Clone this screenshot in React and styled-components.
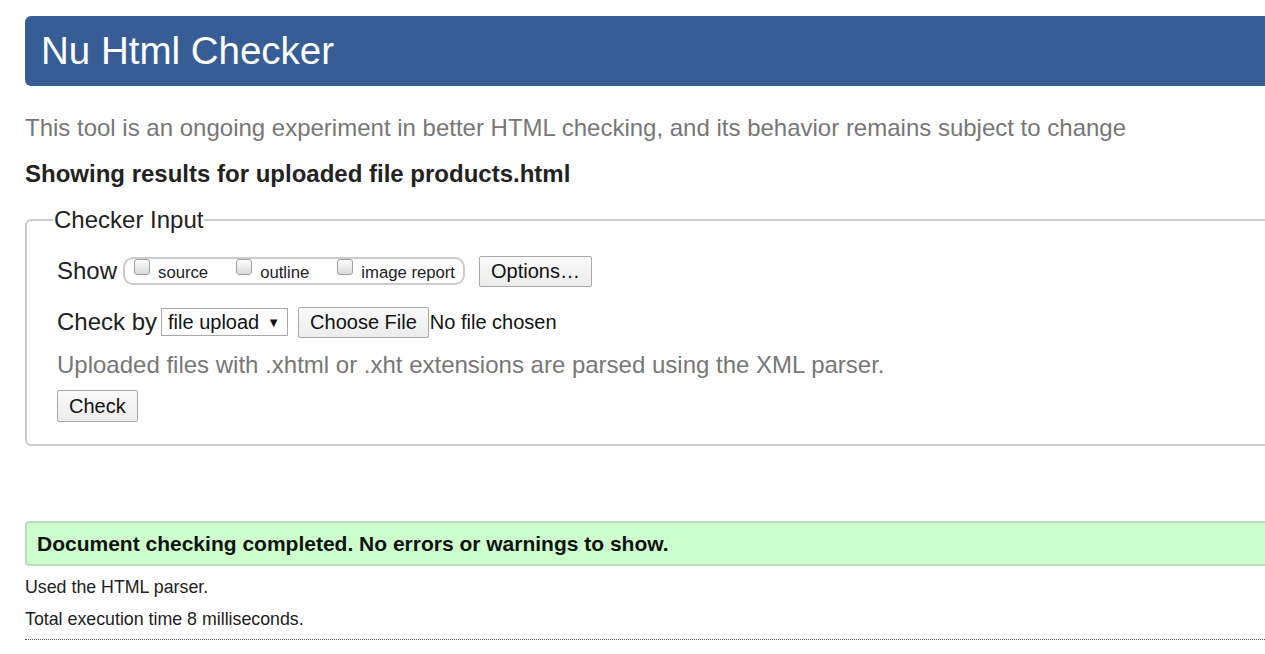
import React from 'react';
import styled, { createGlobalStyle } from 'styled-components';

const GlobalStyle = createGlobalStyle`
  html, body {
    margin: 0;
    padding: 0;
    background: #fff;
    overflow: hidden;
  }
  body {
    font-family: 'Liberation Sans', Arial, sans-serif;
    color: #222;
  }
`;

const Page = styled.div`
  width: 1320px;
  padding: 16px 0 0 25px;
`;

const Header = styled.h1`
  margin: 0;
  height: 70px;
  display: flex;
  align-items: center;
  padding-left: 16px;
  background: #365d95;
  color: #fff;
  font-size: 38.5px;
  font-weight: normal;
  border-radius: 6px;
`;

const Intro = styled.p`
  margin: 29px 0 0;
  font-size: 24px;
  color: #777;
  line-height: 26px;
`;

const ResultTitle = styled.h2`
  margin: 20px 0 0;
  font-size: 24px;
  font-weight: bold;
  line-height: 26px;
  color: #222;
`;

const Fieldset = styled.fieldset`
  margin: 19px 0 0;
  padding: 21px 0 22px 30px;
  border: 2px solid #ccc;
  border-radius: 6px;
  min-height: 0;
`;

const Legend = styled.legend`
  font-size: 24px;
  line-height: 28px;
  padding: 0 1px;
  margin-left: -4px;
  color: #222;
`;

const Row = styled.div`
  display: flex;
  align-items: center;
  gap: ${(p) => p.$gap || 8}px;
  min-height: 32px;
  margin-bottom: ${(p) => p.$mb || 0}px;
`;

const Label = styled.span`
  font-size: 24px;
  color: #222;
`;

const CheckGroup = styled.div`
  display: flex;
  align-items: center;
  height: 24px;
  padding: 0 8px 0 9px;
  border: 2px solid #ccc;
  border-radius: 10px;
  gap: 28px;
`;

const CheckLabel = styled.label`
  display: flex;
  align-items: center;
  font-size: 16.7px;
  color: #222;
  gap: 8px;
  padding-top: 3px;
`;

const Box = styled.span`
  display: inline-block;
  width: 14px;
  height: 14px;
  border: 1px solid #a0a0a0;
  border-radius: 3px;
  background: linear-gradient(#fcfcfc, #dcdcdc);
  margin-top: -11px;
`;

const Button = styled.button`
  font-family: inherit;
  font-size: 20px;
  color: #111;
  background: linear-gradient(#fafafa, #ececec);
  border: 1px solid #a9a9a9;
  border-radius: 2px;
  padding: 0 ${(p) => p.$px || 11}px;
  height: ${(p) => p.$h || 31}px;
  margin-left: ${(p) => p.$ml || 0}px;
  cursor: pointer;
`;

const Select = styled.div`
  display: flex;
  align-items: center;
  gap: 8px;
  height: 26px;
  padding: 0 7px 0 6px;
  margin-left: -1px;
  border: 1px solid #a9a9a9;
  font-size: 20px;
  color: #111;
  background: #fff;
`;

const Arrow = styled.span`
  font-size: 13px;
`;

const FileName = styled.span`
  font-size: 20px;
  color: #111;
  margin-left: -4px;
`;

const Hint = styled.p`
  margin: 14px 0 12px;
  font-size: 24px;
  line-height: 26px;
  color: #777;
`;

const Success = styled.div`
  margin-top: 75px;
  height: 41px;
  display: flex;
  align-items: center;
  padding-left: 10px;
  background: #ccffcc;
  border: 2px solid #bbddbb;
  border-radius: 4px;
  font-size: 21px;
  font-weight: bold;
  color: #111;
`;

const Note = styled.p`
  margin: ${(p) => p.$mt || 0}px 0 0;
  font-size: 17.8px;
  line-height: 20px;
  color: #222;
`;

const Divider = styled.hr`
  margin: 10px 0 0;
  border: none;
  border-top: 1px dotted #555;
`;

export default function App() {
  return (
    <>
      <GlobalStyle />
      <Page>
        <Header>Nu Html Checker</Header>
        <Intro>
          This tool is an ongoing experiment in better HTML checking, and its behavior remains subject to change
        </Intro>
        <ResultTitle>Showing results for uploaded file products.html</ResultTitle>
        <Fieldset>
          <Legend>Checker Input</Legend>
          <Row $gap={6} $mb={19}>
            <Label>Show</Label>
            <CheckGroup>
              <CheckLabel><Box />source</CheckLabel>
              <CheckLabel><Box />outline</CheckLabel>
              <CheckLabel><Box />image report</CheckLabel>
            </CheckGroup>
            <Button $ml={8}>Options…</Button>
          </Row>
          <Row $gap={5}>
            <Label>Check by</Label>
            <Select>file upload <Arrow>▼</Arrow></Select>
            <Button $ml={5}>Choose File</Button>
            <FileName>No file chosen</FileName>
          </Row>
          <Hint>Uploaded files with .xhtml or .xht extensions are parsed using the XML parser.</Hint>
          <Button $h={32}>Check</Button>
        </Fieldset>
        <Success>Document checking completed. No errors or warnings to show.</Success>
        <Note $mt={11}>Used the HTML parser.</Note>
        <Note $mt={12}>Total execution time 8 milliseconds.</Note>
        <Divider />
      </Page>
    </>
  );
}
